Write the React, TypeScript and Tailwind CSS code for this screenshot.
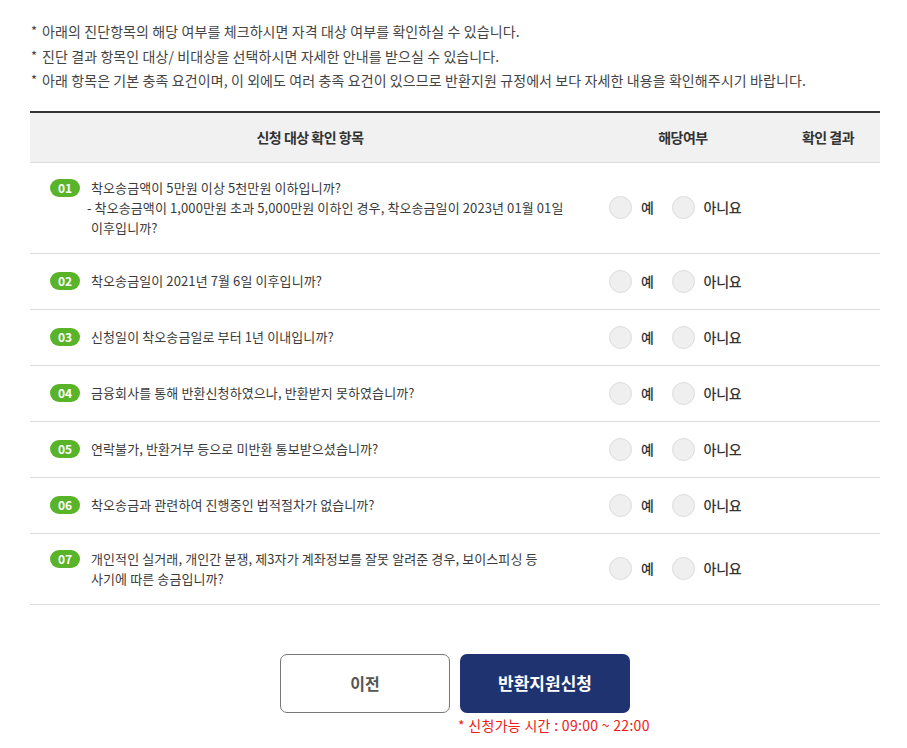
import React from "react";

const font = { fontFamily: '"Noto Sans CJK KR", "Noto Sans", sans-serif' };

type Item = { no: string; lines: React.ReactNode[]; no2?: string };

const items: Item[] = [
  {
    no: "01",
    lines: [
      "착오송금액이 5만원 이상 5천만원 이하입니까?",
      <span className="-ml-[4px]">- 착오송금액이 1,000만원 초과 5,000만원 이하인 경우, 착오송금일이 2023년 01월 01일</span>,
      "이후입니까?",
    ],
  },
  { no: "02", lines: ["착오송금일이 2021년 7월 6일 이후입니까?"] },
  { no: "03", lines: ["신청일이 착오송금일로 부터 1년 이내입니까?"] },
  { no: "04", lines: ["금융회사를 통해 반환신청하였으나, 반환받지 못하였습니까?"] },
  { no: "05", lines: ["연락불가, 반환거부 등으로 미반환 통보받으셨습니까?"], no2: "아니오" },
  { no: "06", lines: ["착오송금과 관련하여 진행중인 법적절차가 없습니까?"] },
  {
    no: "07",
    lines: [
      "개인적인 실거래, 개인간 분쟁, 제3자가 계좌정보를 잘못 알려준 경우, 보이스피싱 등",
      "사기에 따른 송금입니까?",
    ],
  },
];

const notes = [
  "아래의 진단항목의 해당 여부를 체크하시면 자격 대상 여부를 확인하실 수 있습니다.",
  "진단 결과 항목인 대상/ 비대상을 선택하시면 자세한 안내를 받으실 수 있습니다.",
  "아래 항목은 기본 충족 요건이며, 이 외에도 여러 충족 요건이 있으므로 반환지원 규정에서 보다 자세한 내용을 확인해주시기 바랍니다.",
];

const Radio = ({ label }: { label: string }) => (
  <label className="flex items-center gap-[9px] cursor-pointer">
    <span className="w-[23px] h-[23px] rounded-full bg-[#efefef] border border-[#dcdcdc]" />
    <span className="text-[14px] font-medium text-[#333] tracking-[-0.3px]">{label}</span>
  </label>
);

export default function App() {
  return (
    <div className="bg-white min-h-[748px] px-[30px] pt-[19px] pb-4" style={font}>
      <ul className="text-[14px] leading-[24.5px] text-[#444] tracking-[0.1px]">
        {notes.map((n) => (
          <li key={n} className="flex">
            <span className="w-[12px] shrink-0 pl-[1px] text-[13px]">*</span>
            <span>{n}</span>
          </li>
        ))}
      </ul>

      <div className="mt-[18px] w-[850px] border-t-2 border-[#333]">
        <div className="flex h-[50px] items-center bg-[#f1f1f1] border-b border-[#ddd] text-[14px] font-bold text-[#333] tracking-[-0.5px]">
          <div className="w-[560px] text-center">신청 대상 확인 항목</div>
          <div className="w-[186px] text-center">해당여부</div>
          <div className="flex-1 text-center">확인 결과</div>
        </div>

        {items.map((it) => (
          <div key={it.no} className="flex items-center min-h-[56px] py-[15px] border-b border-[#ddd]">
            <div className="w-[560px] flex items-start pl-[20px]">
              <span className="mt-[1px] w-[30px] h-[18px] rounded-full bg-[#5ab42a] text-white text-[12px] font-bold leading-[18px] text-center shrink-0">
                {it.no}
              </span>
              <div className="ml-[11px] text-[13px] leading-[20px] text-[#3a3a3a] tracking-[0.1px]">
                {it.lines.map((l, i) => (
                  <div key={i}>{l}</div>
                ))}
              </div>
            </div>
            <div className="w-[186px] flex items-center gap-[18px] pl-[19px]">
              <Radio label="예" />
              <Radio label={it.no2 ?? "아니요"} />
            </div>
            <div className="flex-1" />
          </div>
        ))}
      </div>

      <div className="mt-[49px] flex justify-center gap-[10px] pl-[3px]">
        <button className="w-[170px] h-[59px] rounded-[7px] border border-[#777] bg-white text-[16px] font-bold text-[#555]">
          이전
        </button>
        <div className="flex flex-col w-[170px]">
          <button className="w-[170px] h-[59px] rounded-[7px] bg-[#1e3370] text-[17px] font-bold text-white">
            반환지원신청
          </button>
          <div className="mt-[2px] -ml-[2px] whitespace-nowrap text-[14px] tracking-[0.3px] text-[#f01818]">* 신청가능 시간 : 09:00 ~ 22:00</div>
        </div>
      </div>
    </div>
  );
}
